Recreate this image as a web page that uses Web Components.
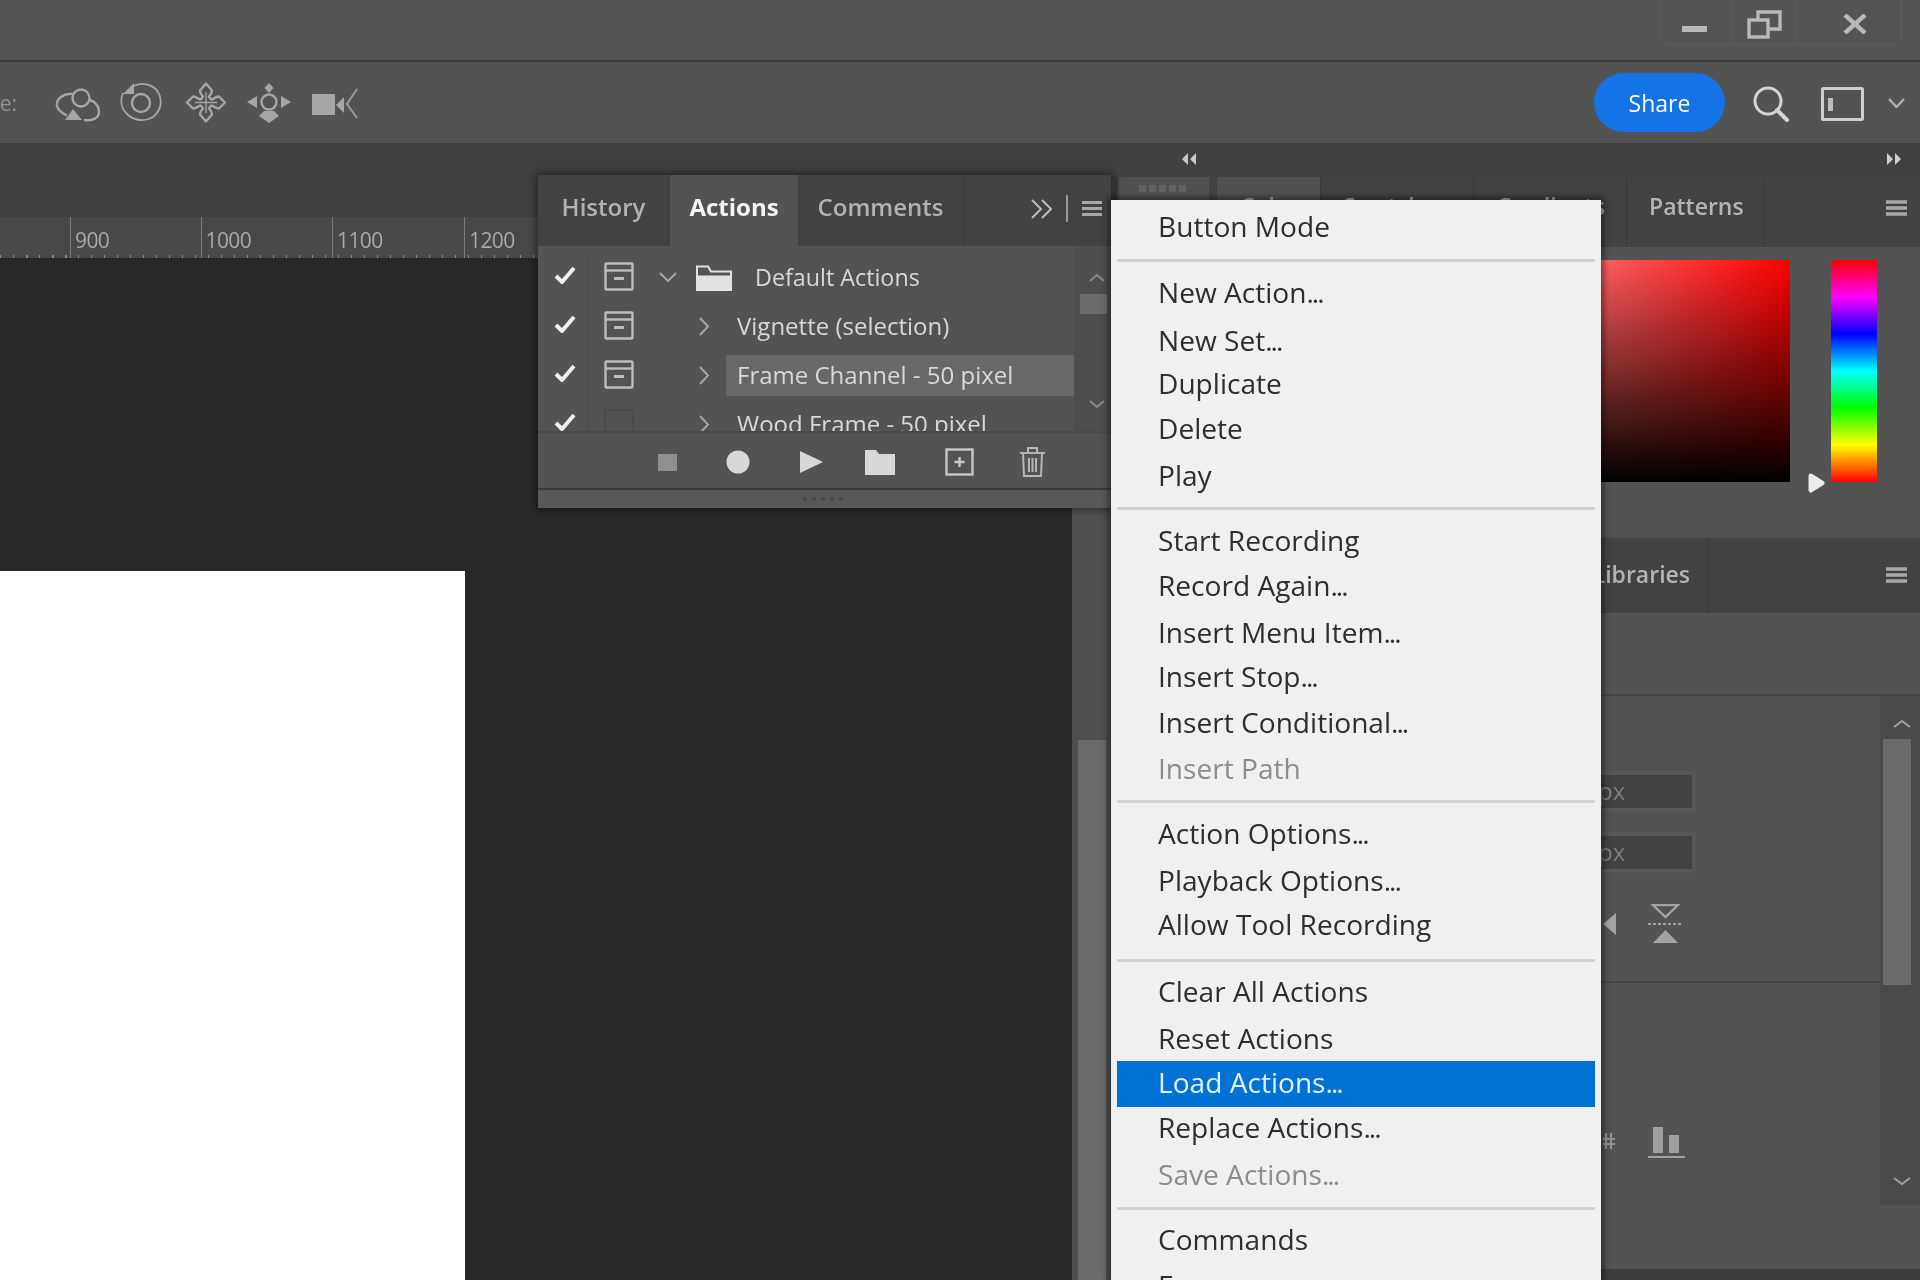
<!DOCTYPE html>
<html lang="en"><head><meta charset="utf-8"><title>Photoshop Actions menu</title>
<style>html,body{margin:0;padding:0;background:#282828}body{font-family:"Open Sans","Liberation Sans",sans-serif}
ps-item span{letter-spacing:-2px}</style>
</head><body>
<ps-app>
  <ps-titlebar></ps-titlebar>
  <ps-options></ps-options>
  <ps-main>
    <ps-workspace></ps-workspace>
    <ps-dock></ps-dock>
  </ps-main>
  <ps-actions></ps-actions>
  <ps-menu>
    <ps-item>Button Mode</ps-item><ps-sep></ps-sep>
    <ps-item>New Action<span>...</span></ps-item><ps-item style="--lh:50px">New Set<span>...</span></ps-item><ps-item>Duplicate</ps-item><ps-item>Delete</ps-item><ps-item style="--lh:47px">Play</ps-item><ps-sep></ps-sep>
    <ps-item>Start Recording</ps-item><ps-item>Record Again<span>...</span></ps-item><ps-item style="--lh:46px">Insert Menu Item<span>...</span></ps-item><ps-item>Insert Stop<span>...</span></ps-item><ps-item>Insert Conditional<span>...</span></ps-item><ps-item disabled style="--lh:44px">Insert Path</ps-item><ps-sep></ps-sep>
    <ps-item>Action Options<span>...</span></ps-item><ps-item style="--lh:47px">Playback Options<span>...</span></ps-item><ps-item>Allow Tool Recording</ps-item><ps-sep style="--h:22px"></ps-sep>
    <ps-item style="--lh:43px">Clear All Actions</ps-item><ps-item style="--lh:45px">Reset Actions</ps-item><ps-item active style="--lh:43px">Load Actions<span>...</span></ps-item><ps-item style="--lh:41px">Replace Actions<span>...</span></ps-item><ps-item disabled>Save Actions<span>...</span></ps-item><ps-sep></ps-sep>
    <ps-item style="--lh:43px">Commands</ps-item><ps-item>Frames</ps-item>
  </ps-menu>
</ps-app>
<script>
const S='#a6a6a6';
const ICONS={
 orbit:[45,35,`<g fill="none" stroke="${S}" stroke-width="2.4" stroke-linecap="round"><circle cx="26" cy="11" r="8.500"/><path d="M18 7C8 6 1 12 2 19c1 4 5 7 9 9"/><path d="M35 13c6 2 9 7 9 12 0 6-6 9-14 8"/></g><path d="M10 33l8-11 9 11z" fill="${S}"/>`],
 roll:[42,41,`<g fill="none" stroke="${S}" stroke-width="1.800"><path d="M14 4C22 0 33 2 38 10c5 8 3 19-5 25-8 5-19 4-26-3C1 26 0 18 3 11"/><circle cx="21" cy="21" r="9" stroke-width="2.400"/></g><path d="M3 12L14 1v11z" fill="${S}"/>`],
 pan:[40,41,`<path d="M20 1.500l6 7c0 3-2 5-3 6q1.500 3 3 3c2-1 4-3 7-3l6 6-6 6c-3 0-5-2-7-3q-1.500 0-3 3c1 1 3 3 3 6l-6 7-6-7c0-3 2-5 3-6q-1.500-3-3-3c-2 1-4 3-7 3l-6-6 6-6c3 0 5 2 7 3q1.500 0 3-3c-1-1-3-3-3-6z" fill="none" stroke="${S}" stroke-width="2.400" stroke-linejoin="round"/><path d="M20 10v21M9 20.500h22" stroke="${S}" stroke-width="1.300"/>`],
 slide:[44,40,`<circle cx="22" cy="19" r="7.500" fill="none" stroke="${S}" stroke-width="2.400"/><path d="M22 0l4.500 5-4.500 5-4.500-5zM0 19l10-6v12zM44 19l-10-6v12zM22 40l-10-7 5-5h10l5 5z" fill="${S}"/>`],
 camera:[46,31,`<rect x="0" y="6" width="23" height="21" fill="${S}"/><path d="M24 17l8-8v16z" fill="${S}"/><path d="M45 1L35 16l10 14" fill="none" stroke="#9a9a9a" stroke-width="2"/>`],
 min:[25,6,`<rect width="25" height="6" fill="#b9b9b9"/>`],
 restore:[35,29,`<g fill="none" stroke="#b9b9b9" stroke-width="3.400"><rect x="2" y="10" width="19" height="17"/><path d="M11 10V2h22v17H21"/></g>`],
 close:[24,20,`<path d="M2 1l20 18M22 1L2 19" stroke="#b9b9b9" stroke-width="4.400" fill="none"/>`],
 search:[36,36,`<circle cx="15" cy="15" r="13" fill="none" stroke="#d5d5d5" stroke-width="3"/><path d="M24 24l10 10" stroke="#d5d5d5" stroke-width="4" stroke-linecap="round"/>`],
 panel:[43,34,`<rect x="1.500" y="1.500" width="40" height="31" rx="1" fill="none" stroke="#cfcfcf" stroke-width="3"/><rect x="7" y="11" width="5" height="13" fill="#bdbdbd"/>`],
 chev:[17,10,`<path d="M1 1l7.500 8L16 1" fill="none" stroke="#b0b0b0" stroke-width="2.400"/>`],
 dblr:[15,12,`<path d="M0 0l6 6-6 6zM8 0l6 6-6 6z" fill="#d0d0d0"/>`],
 dbll:[15,12,`<path d="M7 0L1 6l6 6zM15 0L9 6l6 6z" fill="#c8c8c8"/>`],
 burger:[21,16,`<path d="M0 2h21M0 8h21M0 14h21" stroke="#a8a8a8" stroke-width="3.600"/>`],
 burger2:[20,15,`<path d="M0 1.500h20M0 7.500h20M0 13.500h20" stroke="#a8a8a8" stroke-width="3"/>`],
 overflow:[21,20,`<path d="M1 1l9 9-9 9M11 1l9 9-9 9" fill="none" stroke="#bcbcbc" stroke-width="2"/>`],
 check:[22,18,`<path d="M2 10l6 6L20 2" fill="none" stroke="#f0f0f0" stroke-width="4"/>`],
 box:[30,29,`<g fill="none" stroke="#bdbdbd" stroke-width="2.400"><rect x="1.500" y="1.500" width="27" height="26" rx="1"/><path d="M1.500 8.500h27"/></g><rect x="10" y="15" width="10" height="3" fill="#bdbdbd"/>`],
 boxoff:[30,29,`<rect x="1" y="1" width="28" height="27" fill="none" stroke="#4b4b4b" stroke-width="2"/>`],
 chevd:[18,11,`<path d="M1 1l8 8 8-8" fill="none" stroke="#a5a5a5" stroke-width="2"/>`],
 chevr:[11,19,`<path d="M1 1l8 8.500-8 8.500" fill="none" stroke="#a5a5a5" stroke-width="2"/>`],
 folder:[36,26,`<path d="M1 25V1.500h11l3 5h20V25z" fill="#535353" stroke="#e2e2e2" stroke-width="2"/><path d="M1 10.500h34V25H1z" fill="#e2e2e2"/>`],
 up:[16,9,`<path d="M1 8l7-6 7 6" fill="none" stroke="#8a8a8a" stroke-width="2"/>`],
 down:[16,9,`<path d="M1 1l7 6 7-6" fill="none" stroke="#8a8a8a" stroke-width="2"/>`],
 upl:[18,9,`<path d="M1 8l8-6 8 6" fill="none" stroke="#a0a0a0" stroke-width="2"/>`],
 downl:[18,9,`<path d="M1 1l8 6 8-6" fill="none" stroke="#a0a0a0" stroke-width="2"/>`],
 stop:[19,17,`<rect width="19" height="17" fill="#8f8f8f"/>`],
 rec:[24,24,`<circle cx="12" cy="12" r="11.500" fill="#d8d8d8"/>`],
 play:[23,22,`<path d="M0 0l23 11L0 22z" fill="#d8d8d8"/>`],
 folder2:[30,25,`<path d="M0 25V0h11l3 4h16v21z" fill="#d8d8d8"/>`],
 plusbox:[29,28,`<rect x="1.500" y="1.500" width="26" height="25" fill="none" stroke="#c8c8c8" stroke-width="2.400"/><path d="M14.500 9v10M9.500 14h10" stroke="#c8c8c8" stroke-width="2.400"/>`],
 trash:[25,30,`<g fill="none" stroke="#b5b5b5" stroke-width="2"><path d="M0 6h25M8 6V1h9v5"/><path d="M3 6l1 23h17l1-23"/><path d="M9 11v14M12.500 11v14M16 11v14"/></g>`],
 tri:[13,22,`<path d="M13 0v22L0 11z" fill="#a3a3a3"/>`],
 flip:[35,40,`<path d="M5 1h25L17.500 13z" fill="none" stroke="#a3a3a3" stroke-width="2.400"/><path d="M0 20h35" stroke="#a3a3a3" stroke-width="2" stroke-dasharray="3 2"/><path d="M5 39l12.500-13L30 39z" fill="#a3a3a3"/>`],
 cross:[12,16,`<path d="M3 0v16M8 0v16M0 6h12M0 11h12" stroke="#939393" stroke-width="2"/>`],
 bars:[37,31,`<rect x="5" y="0" width="10" height="26" fill="#a0a0a0"/><rect x="21" y="8" width="10" height="18" fill="#a0a0a0"/><path d="M0 30h37" stroke="#a0a0a0" stroke-width="2"/>`]
};
function ic(n,st=''){const [w,h,b]=ICONS[n];return `<svg width="${w}" height="${h}" viewBox="0 0 ${w} ${h}" style="display:block;flex:none;${st}">${b}</svg>`}
function def(name,css,html){customElements.define(name,class extends HTMLElement{
  constructor(){super();const r=this.attachShadow({mode:'open'});
    r.innerHTML=`<style>${css}</style>`+(typeof html==='function'?html(this):html);}
  connectedCallback(){if(typeof html==='function'){this.shadowRoot.innerHTML=`<style>${css}</style>`+html(this);}}
})}
const FONT='"Open Sans","Liberation Sans",sans-serif';

def('ps-app',`:host{display:block;position:relative;width:1920px;height:1280px;overflow:hidden;background:#282828;font-family:${FONT};filter:blur(.65px)}`,`<slot></slot>`);

def('ps-titlebar',`:host{display:flex;justify-content:flex-end;height:60px;background:#545454;border-bottom:2px solid #3b3b3b;padding-right:18px;box-sizing:content-box}
 .box{display:flex;height:45px;border:1px solid #5d5d5d;border-top:0;border-radius:0 0 5px 5px;box-sizing:border-box}
 .c{display:flex;align-items:center;justify-content:center;border-left:1px solid #5d5d5d;box-sizing:border-box}
 .c:first-child{border-left:0}`,
 `<div class="box"><div class="c" style="width:70px;padding:13px 4px 0 0">${ic('min')}</div><div class="c" style="width:65px;padding-top:4px">${ic('restore')}</div><div class="c" style="width:105px;padding:4px 0 0 12px">${ic('close')}</div></div>`);

def('ps-options',`:host{display:flex;align-items:center;height:81px;background:#535353;padding-right:15px;box-sizing:border-box}
 .lab{width:17px;overflow:hidden;display:flex;justify-content:flex-end;font-size:21px;color:#8f8f8f;white-space:nowrap;flex:none}
 .share{flex:none;margin-left:auto;width:131px;height:59px;border-radius:30px;background:#1473e6;color:#fff;font-size:23px;display:flex;align-items:center;justify-content:center}`,
 `<div class="lab">3D Mode:</div>
 ${ic('orbit','margin-left:38px;margin-top:4px')}${ic('roll','margin-left:20px')}${ic('pan','margin-left:24px')}${ic('slide','margin-left:21px')}${ic('camera','margin-left:21px;margin-top:2px')}
 <div class="share">Share</div>${ic('search','margin-left:28px;margin-top:2px')}${ic('panel','margin-left:32px;margin-top:2px')}${ic('chev','margin-left:24px;margin-top:1px')}`);

def('ps-main',`:host{display:flex;height:1137px}`,`<slot></slot>`);

def('ps-workspace',`:host{display:flex;flex-direction:column;width:1114px;flex:none}
 .top{height:74px;background:#404040;flex:none}
 .ruler{height:41px;flex:none;display:flex;padding-left:70px;background:#484848;font-size:21px;letter-spacing:-.6px;color:#a8a8a8;
   background-image:repeating-linear-gradient(to right,#8a8a8a 0 1.500px,transparent 1.500px 13px);background-size:100% 3px;background-position:0 100%;background-repeat:no-repeat}
 .ruler span{flex:none;border-left:1.500px solid #7c7c7c;box-sizing:border-box;padding:9px 0 0 4px;line-height:28px}
 .body{flex:1;display:flex;min-height:0}
 .canvas{flex:1;background:#282828;padding-top:313px;display:flex;min-width:0}
 .doc{width:465px;background:#fff}
 .sb{width:42px;flex:none;background:#505050;padding:0 8px 0 6px;display:flex;flex-direction:column;box-sizing:border-box}
 .sb i{display:block;height:482px;flex:none}
 .sb b{display:block;flex:1;background:#6a6a6a}`,
 `<div class="top"></div><div class="ruler"><span style="width:130.500px">900</span><span style="width:131.500px">1000</span><span style="width:132px">1100</span><span style="width:131px">1200</span></div>
  <div class="body"><div class="canvas"><div class="doc"></div></div><div class="sb"><i></i><b></b></div></div>`);

def('ps-dock',`:host{display:flex;flex-direction:column;flex:1;min-width:0;background:#535353;font-size:23px}
 .strip{height:32px;flex:none;background:#414141;display:flex;align-items:center;justify-content:space-between;padding:0 18px 2px 67px}
 .tabs{display:flex;flex:none;background:#424242;position:relative;border-left:3px solid #383838;box-sizing:border-box}
 .tab{flex:none;display:flex;align-items:center;color:#b4b4b4;font-weight:600;box-sizing:border-box;border-right:1px solid #3a3a3a;white-space:nowrap;padding-bottom:12px}
 .first{width:100px;flex:none;display:flex;padding-left:2px;box-sizing:border-box}
 .first div{width:90px;background:#515151;display:flex;justify-content:center;padding-top:8px;box-sizing:border-box}
 .first i{display:block;width:50px;height:7px;background:repeating-linear-gradient(to right,#626262 0 7px,transparent 7px 10px)}
 .burger{margin:-8px 13px 0 auto;align-self:center}
 .color{height:292px;flex:none;display:flex;padding-top:13px;box-sizing:border-box;border-bottom:2px solid #474747}
 .field{width:510px;height:222px;margin-left:166px;background:linear-gradient(to bottom,transparent,#000),linear-gradient(to right,#fff,#f00);flex:none}
 .hue{position:relative;width:46px;height:222px;margin-left:41px;flex:none;background:linear-gradient(to bottom,#f00,#f0f,#00f,#0ff,#0f0,#ff0,#f00)}
 .handle{position:absolute;left:-24px;top:211px;display:block}
 .lib{height:81px;flex:none;border-bottom:2px solid #464646}
 .props{flex:1;display:flex;min-height:0}
 .pl{flex:1;min-width:0;display:flex;flex-direction:column}
 .s1{height:287px;flex:none;border-bottom:2px solid #464646;box-sizing:border-box;padding-top:79px}
 .s2{flex:1;padding-top:144px;display:flex;box-sizing:border-box;padding-left:489px;align-items:flex-start}
 .inp{width:192px;height:33px;margin:0 0 28px 386px;background:#424242;box-shadow:0 0 0 4px #585858;color:#7d7d7d;font-size:24px;line-height:32px;padding-left:98px;box-sizing:border-box}
 .row{display:flex;padding:7px 0 0 489px;align-items:center}
 .sbr{width:40px;flex:none;height:509px;background:#4a4a4a;display:flex;flex-direction:column;align-items:center;box-sizing:border-box;padding:23px 0 0 3px}
 .thumb{width:28px;height:246px;background:#6a6a6a;margin:11px 0 192px;flex:none;position:relative;left:-5px}
 .foot{height:11px;flex:none;background:#3d3d3d}`,
 `<div class="strip">${ic('dbll')}${ic('dblr')}</div>
  <div class="tabs" style="height:70px">
   <div class="first"><div><i></i></div></div>
   <div class="tab" style="width:104px;background:#515151;padding-left:23px">Color</div>
   <div class="tab" style="width:153px;padding-left:22px">Swatches</div>
   <div class="tab" style="width:153px;padding-left:22px">Gradients</div>
   <div class="tab" style="width:138px;padding-left:22px">Patterns</div>
   <div class="burger">${ic('burger')}</div>
  </div>
  <div class="color"><div class="field"></div><div class="hue"><svg class="handle" width="20" height="24" viewBox="0 0 20 24"><path d="M4 5l11 7-11 7z" fill="#ececec" stroke="#ececec" stroke-width="5" stroke-linejoin="round"/></svg></div></div>
  <div class="tabs" style="height:74px">
   <div class="tab" style="width:591px;justify-content:flex-end;padding:0 17px 4px 0;background:#424242">Libraries</div>
   <div class="burger" style="margin-top:-2px">${ic('burger')}</div>
  </div>
  <div class="lib"></div>
  <div class="props">
   <div class="pl">
    <div class="s1"><div class="inp">px</div><div class="inp">px</div>
     <div class="row">${ic('tri')}${ic('flip','margin-left:32px')}</div></div>
    <div class="s2">${ic('cross','margin-top:6px')}${ic('bars','margin-left:33px')}</div>
   </div>
   <div class="sbr">${ic('upl')}<div class="thumb"></div>${ic('downl')}</div>
  </div>
  <div class="foot"></div>`);

def('ps-action-row',`:host{display:grid;grid-template-columns:51px 56px 1fr;height:49px;align-items:center;font-size:24px;color:#d8d8d8;white-space:nowrap}
 .chk{display:flex;justify-content:center;height:49px;align-items:center;border-right:1.500px solid #4a4a4a;box-sizing:border-box;padding:0 0 6px 4px}
 .bx{padding:0 0 3px 15px}
 .name{display:flex;align-items:center;min-width:0}
 .lab{flex:1;height:41px;line-height:39px;padding-left:11px;min-width:0}
 :host([selected]) .lab{background:#686868}`,
 el=>{
  const lvl0=el.hasAttribute('open');
  return `<div class="chk">${ic('check')}</div><div class="bx">${ic(el.hasAttribute('nobox')?'boxoff':'box')}</div>
  <div class="name">${lvl0?ic('chevd','margin-left:14px')+ic('folder','margin-left:19px')+`<div class="lab" style="padding-left:23px;line-height:41px;font-size:23.300px"><slot></slot></div>`
   :ic('chevr','margin-left:54px')+`<div class="lab" style="margin-left:16px"><slot></slot></div>`}</div>`});

def('ps-actions',`:host{position:absolute;left:538px;top:175px;width:573px;height:333px;display:flex;flex-direction:column;background:#535353;box-shadow:0 0 8px 2px rgba(0,0,0,.45)}
 .tabs{height:71px;flex:none;display:flex;background:#424242;font-size:24px;font-weight:600;color:#b2b2b2;align-items:stretch}
 .tab{flex:none;display:flex;align-items:center;justify-content:center;box-sizing:border-box;border-right:1px solid #3a3a3a;padding-bottom:8px}
 .act{background:#535353;color:#f4f4f4;border:0;font-weight:700}
 .ctl{display:flex;align-items:center;flex:1;padding:0 0 4px 67px}
 .bar{width:1.500px;height:27px;background:#9a9a9a;margin:0 14px}
 .list{height:187px;flex:none;display:flex;overflow:hidden;border-bottom:2px solid #4a4a4a;box-sizing:border-box}
 .rows{width:536px;flex:none;padding-top:7px;box-sizing:border-box}
 .sb{width:37px;flex:none;background:#4e4e4e;display:flex;flex-direction:column;align-items:flex-start;padding-top:27px;box-sizing:border-box}
 .sb svg{margin-left:15px}
 .sb b{display:block;width:27px;height:20px;background:#6a6a6a;margin:12px 0 86px 6px;flex:none}
 .btns{height:55px;flex:none;display:flex;align-items:center;padding:3px 0 0 120px;box-sizing:border-box}
 .grip{height:20px;flex:none;border-top:2px solid #3c3c3c;background:#585858;box-sizing:border-box;display:flex;justify-content:center;align-items:center}
 .grip i{display:block;width:44px;height:4px;background:repeating-linear-gradient(to right,#4a4a4a 0 4px,transparent 4px 9px)}`,
 `<div class="tabs"><div class="tab" style="width:132px">History</div><div class="tab act" style="width:128px">Actions</div><div class="tab" style="width:166px">Comments</div>
   <div class="ctl">${ic('overflow')}<div class="bar"></div>${ic('burger2')}</div></div>
  <div class="list"><div class="rows">
    <ps-action-row open>Default Actions</ps-action-row>
    <ps-action-row>Vignette (selection)</ps-action-row>
    <ps-action-row selected>Frame Channel - 50 pixel</ps-action-row>
    <ps-action-row nobox>Wood Frame - 50 pixel</ps-action-row>
  </div><div class="sb">${ic('up')}<b></b>${ic('down')}</div></div>
  <div class="btns">${ic('stop')}${ic('rec','margin-left:49px')}${ic('play','margin-left:50px')}${ic('folder2','margin-left:42px')}${ic('plusbox','margin-left:50px')}${ic('trash','margin-left:46px')}</div>
  <div class="grip"><i></i></div>`);

def('ps-menu',`:host{position:absolute;left:1111px;top:200px;width:490px;height:1080px;overflow:hidden;background:#f0f0f0;box-sizing:border-box;padding:4px 6px 0;box-shadow:0 0 6px 3px rgba(0,0,0,.45);display:block}`,`<slot></slot>`);
def('ps-item',`:host{display:block;height:45.600px;line-height:var(--lh,45px);padding-left:41px;font-size:28.100px;color:#2e2e2e;white-space:nowrap;overflow:hidden}
 :host([disabled]){color:#8c8c8c}
 :host([active]){background:#0072d6;color:#e4f0fb}`,`<slot></slot>`);
def('ps-sep',`:host{height:var(--h,20px);display:flex;align-items:flex-end;padding-bottom:8px;box-sizing:border-box}
 div{flex:1;height:3px;background:#d2d2d2}`,`<div></div>`);
</script>
</body></html>
